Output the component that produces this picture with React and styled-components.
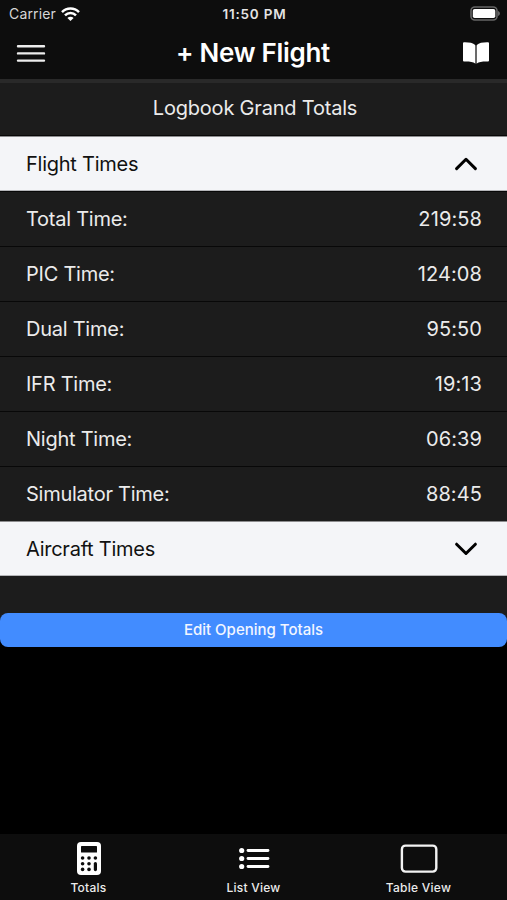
import { useState } from 'react';
import styled, { createGlobalStyle } from 'styled-components';

const GlobalStyle = createGlobalStyle`
  * {
    box-sizing: border-box;
  }
  body {
    margin: 0;
    background: #000;
    color: #ebebeb;
    font-family: Inter, 'Liberation Sans', sans-serif;
  }
  svg {
    display: block;
  }
`;

const Screen = styled.div`
  display: flex;
  flex-direction: column;
  height: 900px;
  overflow: hidden;
`;

const Header = styled.header`
  height: 83px;
  background: #0d0d0d;
  border-bottom: 4px solid #292929;
`;

const StatusBar = styled.div`
  display: grid;
  grid-template-columns: 1fr auto 1fr;
  align-items: center;
  height: 27px;
  padding: 0 7px 0 9px;
  font-size: 14px;
`;

const Carrier = styled.div`
  display: flex;
  align-items: center;
  gap: 5px;
  color: #d6d6d6;
  letter-spacing: 0.15px;
`;

const Clock = styled.div`
  font-size: 13.5px;
  font-weight: 600;
  letter-spacing: 0.8px;
  color: #e4e4e4;
`;

const Battery = styled.div`
  justify-self: end;
`;

const Toolbar = styled.div`
  display: grid;
  grid-template-columns: 1fr auto 1fr;
  align-items: center;
  height: 51px;
  padding: 0 17px 0 16px;
  > :last-child {
    justify-self: end;
  }
`;

const Title = styled.h1`
  margin: 0;
  font-size: 26px;
  font-weight: 600;
  line-height: 30px;
  letter-spacing: -0.3px;
  color: #fff;
`;

const Content = styled.main`
  flex: 1;
`;

const List = styled.div`
  background: #1c1c1c;
  padding-bottom: 37px;
`;

const ListTitle = styled.div`
  height: 53px;
  line-height: 51px;
  padding-left: 3px;
  border-bottom: 1px solid #080808;
  text-align: center;
  font-size: 20px;
  letter-spacing: -0.2px;
`;

const Row = styled.div`
  display: flex;
  align-items: center;
  justify-content: space-between;
  height: 55px;
  padding: 0 25px 0 26px;
  border-top: 1px solid #080808;
  font-size: 20px;
`;

const Label = styled.span`
  letter-spacing: -0.25px;
`;

const Value = styled.span`
  letter-spacing: 0.1px;
`;

const SectionRow = styled(Row)`
  padding-right: 29px;
  border-top-color: #8c8c8e;
  border-bottom: 1px solid #b4b5b8;
  background: #f4f5f8;
  color: #111;
  cursor: pointer;
`;

const Button = styled.button`
  display: block;
  width: 100%;
  height: 34px;
  padding: 0 0 1px;
  border: 0;
  border-radius: 8px;
  background: #428cff;
  color: #f2f6ff;
  font: 500 15px Inter, 'Liberation Sans', sans-serif;
  letter-spacing: 0;
`;

const ButtonWrapper = styled.div`
  background: linear-gradient(#1c1c1c 50%, #000 50%);
`;

const TabBar = styled.nav`
  display: grid;
  grid-template-columns: 1fr 1fr 1fr;
  height: 66px;
  padding: 0 6px;
  background: #0d0d0d;
`;

const Tab = styled.div`
  display: flex;
  flex-direction: column;
  align-items: center;
  padding-top: 7px;
  font-size: 12px;
  font-weight: 500;
  line-height: 16px;
  letter-spacing: 0.25px;
  > svg {
    margin-bottom: 5px;
  }
`;

const WifiIcon = () => (
  <svg width="19" height="14" viewBox="0 0 19 14" fill="none" stroke="#fff" strokeWidth="2.5">
    <path d="M1 5.1a12 12 0 0 1 17 0" />
    <path d="M4 8.4a7.7 7.7 0 0 1 11 0" />
    <path d="M6.4 11a4.4 4.4 0 0 1 6.2 0L9.5 14z" fill="#fff" stroke="none" />
  </svg>
);

const BatteryIcon = () => (
  <svg width="31" height="15" viewBox="0 0 31 15">
    <rect x="2" y="1" width="26" height="13" rx="3.8" fill="none" stroke="#666" strokeWidth="1.6" />
    <rect x="3.8" y="3" width="22.5" height="9" rx="1.8" fill="#fff" />
    <path d="M29 5v5c2.6-1 2.6-4 0-5z" fill="#666" />
  </svg>
);

const MenuIcon = () => (
  <svg width="30" height="20" viewBox="0 0 30 20" stroke="#ededed" strokeWidth="2.4" strokeLinecap="round">
    <path d="M2 3.2h26M2 10.4h26M2 17.6h26" />
  </svg>
);

const BookIcon = () => (
  <svg width="28" height="24" viewBox="0 0 28 24" fill="#fff">
    <path d="M13.2 3.9C11 1.8 7 1.1 2 1.2Q1 1.2 1 2.2V19.4Q1 20.4 2 20.4C7.4 20.3 11 20.6 13.2 22.5z" />
    <path d="M14.8 3.9C17 1.8 21 1.1 26 1.2Q27 1.2 27 2.2V19.4Q27 20.4 26 20.4C20.6 20.3 17 20.6 14.8 22.5z" />
    <path d="M13.2 4.6h1.6v17.8h-1.6z" fill="#777" />
  </svg>
);

const Chevron = ({ open }) => (
  <svg
    width="24"
    height="16"
    viewBox="0 0 24 16"
    fill="none"
    stroke="#000"
    strokeWidth="3"
    strokeLinecap="round"
    strokeLinejoin="round"
  >
    <path d={open ? 'M2.6 12.6L12 3.3L21.4 12.6' : 'M2.6 3.2L12 12.5L21.4 3.2'} />
  </svg>
);

const CalculatorIcon = () => (
  <svg width="36" height="34" viewBox="0 0 36 34">
    <rect x="6" y="1" width="24" height="33" rx="4" fill="#fff" />
    <g fill="#0d0d0d">
      <rect x="10" y="5" width="16" height="6.5" rx="0.6" />
      {[17, 22.7, 28.4].map((y) => (
        <g key={y}>
          <circle cx="11.6" cy={y} r="1.8" />
          <circle cx="18" cy={y} r="1.8" />
        </g>
      ))}
      <circle cx="24.4" cy="17" r="1.8" />
      <rect x="22.8" y="21" width="3.2" height="9.2" rx="1.6" />
    </g>
  </svg>
);

const ListIcon = () => (
  <svg width="36" height="34" viewBox="0 0 36 34">
    {[9.5, 17.5, 25.5].map((y) => (
      <g key={y}>
        <circle cx="5.7" cy={y} r="2.6" fill="#fff" />
        <path d={`M12 ${y}h20`} stroke="#fff" strokeWidth="2.8" strokeLinecap="round" />
      </g>
    ))}
  </svg>
);

const TabletIcon = () => (
  <svg width="38" height="34" viewBox="0 0 38 34">
    <rect x="1.9" y="4.6" width="34.4" height="26" rx="3.6" fill="none" stroke="#f2f2f2" strokeWidth="2.4" />
  </svg>
);

const flightTimes = [
  { label: 'Total Time:', value: '219:58' },
  { label: 'PIC Time:', value: '124:08' },
  { label: 'Dual Time:', value: '95:50' },
  { label: 'IFR Time:', value: '19:13' },
  { label: 'Night Time:', value: '06:39' },
  { label: 'Simulator Time:', value: '88:45' },
];

const App = () => {
  const [open, setOpen] = useState(true);

  return (
    <Screen>
      <GlobalStyle />
      <Header>
        <StatusBar>
          <Carrier>
            <span>Carrier</span>
            <WifiIcon />
          </Carrier>
          <Clock>11:50 PM</Clock>
          <Battery>
            <BatteryIcon />
          </Battery>
        </StatusBar>
        <Toolbar>
          <MenuIcon />
          <Title>+ New Flight</Title>
          <BookIcon />
        </Toolbar>
      </Header>
      <Content>
        <List>
          <ListTitle>Logbook Grand Totals</ListTitle>
          <SectionRow onClick={() => setOpen(!open)}>
            <Label>Flight Times</Label>
            <Chevron open={open} />
          </SectionRow>
          {open &&
            flightTimes.map(({ label, value }) => (
              <Row key={label}>
                <Label>{label}</Label>
                <Value>{value}</Value>
              </Row>
            ))}
          <SectionRow>
            <Label>Aircraft Times</Label>
            <Chevron />
          </SectionRow>
        </List>
        <ButtonWrapper>
          <Button>Edit Opening Totals</Button>
        </ButtonWrapper>
      </Content>
      <TabBar>
        <Tab>
          <CalculatorIcon />
          Totals
        </Tab>
        <Tab>
          <ListIcon />
          List View
        </Tab>
        <Tab>
          <TabletIcon />
          Table View
        </Tab>
      </TabBar>
    </Screen>
  );
};

export default App;
